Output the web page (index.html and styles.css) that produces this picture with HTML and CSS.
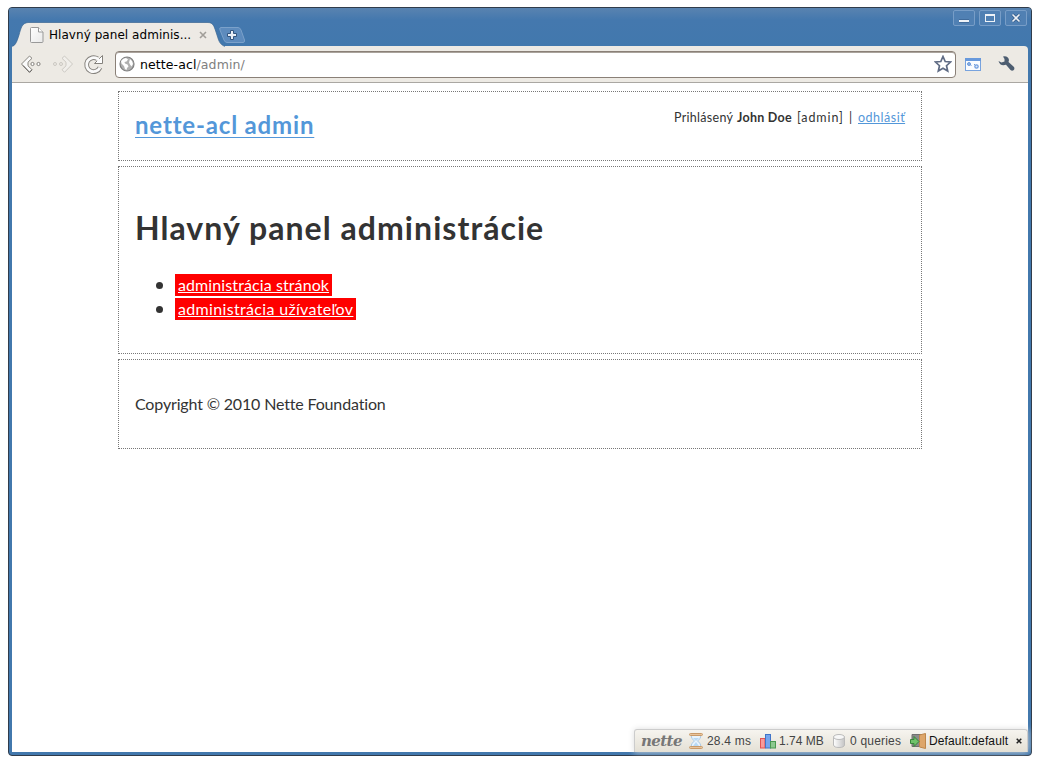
FILE: index.html
```html
<!DOCTYPE html>
<html lang="sk">
<head>
<meta charset="utf-8">
<title>Hlavný panel administrácie</title>
<link rel="stylesheet" href="styles.css">
</head>
<body>
<div class="window">
  <div class="titlebar">
    <div class="tab">
      <svg class="tab-shape" width="214" height="25" viewBox="0 0 214 25"><path d="M0 25C4 23 5 19 7 13C9 6 10 1 16 .5H196C201 .5 202 4 204 10C207 19 207 22 214 25Z" fill="#edeae5"/><path d="M0 24.500C4 23 5 19 7 13C9 6 10 1 16 .5H196C201 .5 202 4 204 10C207 19 207 22 213 24.500" fill="none" stroke="#3a6592" stroke-width=".7"/></svg>
      <svg class="page-icon" width="14" height="16" viewBox="0 0 14 16"><defs><linearGradient id="pg" x2="1" y2="1"><stop stop-color="#fff"/><stop offset="1" stop-color="#e9e9e9"/></linearGradient></defs><path d="M1.500.5h7l4.500 4.500v9.500q0 1-1 1h-10.500q-1 0-1-1v-13q0-1 1-1Z" fill="url(#pg)" stroke="#999"/><path d="M8.500.5V5h4.500" fill="#fff" stroke="#999"/></svg>
      <span class="tab-title">Hlavný panel adminis...</span>
      <svg class="tab-close" width="8" height="8" viewBox="0 0 8 8"><path d="M1 1l6 6M7 1l-6 6" stroke="#a19e99" stroke-width="1.600"/></svg>
    </div>
    <svg class="new-tab" width="27" height="16" viewBox="0 0 27 16"><path d="M2 .5H19Q21 .5 22 3L25.500 13Q26 15.500 24 15.500H8Q6 15.500 5 13L1 3Q0 .5 2 .5Z" fill="#5d8bbd" stroke="#7ba1ca"/><path d="M11.500 3.500h3v3h3v3h-3v3h-3v-3h-3v-3h3Z" fill="#e8eef6" stroke="#32557f"/></svg>
    <div class="controls">
      <span class="control"><svg width="22" height="16" viewBox="0 0 22 16"><path d="M6 11h10" stroke="#315682" stroke-width="3"/><path d="M6 11h10" stroke="#eef2f7" stroke-width="2"/></svg></span>
      <span class="control"><svg width="22" height="16" viewBox="0 0 22 16"><rect x="6.500" y="4.500" width="9" height="7" fill="none" stroke="#eef2f7"/><path d="M6 5h10" stroke="#eef2f7" stroke-width="2"/></svg></span>
      <span class="control"><svg width="22" height="16" viewBox="0 0 22 16"><path d="M7.500 4.500l7 7M14.500 4.500l-7 7" stroke="#315682" stroke-width="3"/><path d="M7.500 4.500l7 7M14.500 4.500l-7 7" stroke="#eef2f7" stroke-width="1.600"/></svg></span>
    </div>
  </div>

  <div class="toolbar">
    <svg class="back" width="22" height="20" viewBox="0 0 22 20"><path d="M1.500 10L9.500 2L12 4.300L8 8.200V11.800L12 15.700L9.500 18.300Z" fill="#fafafa" stroke="#88857f" stroke-linejoin="round"/><path d="M3 11.500L9.500 18.300L12 15.700" fill="none" stroke="#66635f"/><circle cx="12.500" cy="10" r="1.600" fill="#fff" stroke="#85827d"/><circle cx="18.500" cy="10" r="1.600" fill="#fff" stroke="#85827d"/></svg>
    <svg class="forward" width="22" height="20" viewBox="0 0 22 20"><path d="M20.500 10L12.500 2L10 4.300L14 8.200V11.800L10 15.700L12.500 18.300Z" fill="#f1efeb" stroke="#ccc9c3" stroke-linejoin="round"/><circle cx="3" cy="10" r="1.500" fill="none" stroke="#cbc8c2"/><circle cx="9" cy="10" r="1.500" fill="none" stroke="#cbc8c2"/></svg>
    <svg class="reload" width="21" height="21" viewBox="0 0 21 21"><path d="M17 13.500A7 7 0 1 1 14.500 4.800" fill="none" stroke="#85827d" stroke-width="4.800"/><path d="M19.500 1.500V9.500H11.500Z" fill="#fff" stroke="#85827d" stroke-linejoin="round"/><path d="M17 13.500A7 7 0 1 1 14.500 4.800L17 7.500" fill="none" stroke="#fafafa" stroke-width="2.900"/></svg>
    <div class="address">
      <svg width="16" height="16" viewBox="0 0 16 16"><circle cx="8" cy="8" r="7" fill="#b0b0b0" stroke="#808080" stroke-width="1.200"/><path d="M2 5Q4 2 7 2L9 3.500L7.500 5.500L5.500 6L6 7.500L8.500 8.500L9.500 10.500L8 12L7.500 14L6 13L5 10L2.500 7.500ZM11 3Q14 5 14 8L12.500 10.500L11 8.500L10 6.500Z" fill="#fff"/></svg>
      <span class="url"><span class="host">nette-acl</span>/admin/</span>
      <svg class="star" width="18" height="18" viewBox="0 0 18 18"><path d="M9 1.500L11.200 6.500L16.500 7L12.500 10.700L13.700 16L9 13.300L4.300 16L5.500 10.700L1.500 7L6.800 6.500Z" fill="#fff" stroke="#5f6b84" stroke-width="1.700"/></svg>
    </div>
    <svg class="extension" width="16" height="13" viewBox="0 0 16 13"><rect x=".5" y=".5" width="15" height="12" fill="#fafcff" stroke="#78a3de"/><path d="M0 1.500h16" stroke="#6899dc" stroke-width="3"/><circle cx="4" cy="6" r="1.500" fill="#8cb1e5" stroke="#6d9bdc"/><circle cx="11.500" cy="8.500" r="1.700" fill="#dce8f9" stroke="#6d9bdc" stroke-width="1.200"/><path d="M5 6.500l1.500 1M9 6l1 1" stroke="#6d9bdc"/></svg>
    <svg class="wrench" width="18" height="16" viewBox="0 0 18 16"><path d="M5 .5Q10-.5 11 4L10.500 6L16 11Q17 13 15.500 14.300Q14 15.300 12.500 14L8 8.800Q2 10.500.5 5L3.500 6.500L6.500 5.500L6.500 3Z" fill="#4d5d70"/></svg>
  </div>

  <div class="viewport">
    <div class="page">
      <header class="box header">
        <a class="brand">nette-acl admin</a>
        <div class="user"><span class="name">Prihlásený</span><b class="who">John Doe</b><span class="role">[admin]</span><span class="divider">|</span><a class="logout">odhlásiť</a></div>
      </header>
      <main class="box main">
        <h1>Hlavný panel administrácie</h1>
        <ul>
          <li><a class="pages-link">administrácia stránok</a></li>
          <li><a class="users-link">administrácia užívateľov</a></li>
        </ul>
      </main>
      <footer class="box footer"><span>Copyright © 2010 Nette Foundation</span></footer>
    </div>
    <div class="debug">
      <span class="nette">nette</span>
      <svg class="hourglass" width="14" height="16" viewBox="0 0 14 16"><path d="M2 2Q2 6 5.500 8Q2 10 2 14H12Q12 10 8.500 8Q12 6 12 2Z" fill="#e9f4fd" stroke="#a9c9e4"/><path d="M4 5H10L7 8ZM7 9L10 13H4Z" fill="#b9daf5"/><rect x=".5" y=".5" width="13" height="2" rx="1" fill="#e8c49c" stroke="#c99a69"/><rect x=".5" y="13.500" width="13" height="2" rx="1" fill="#e8c49c" stroke="#c99a69"/></svg>
      <span class="time">28.4 ms</span>
      <svg class="bars" width="16" height="15" viewBox="0 0 16 15"><rect x=".5" y="4.500" width="4.500" height="9.500" fill="#f79a9a" stroke="#e15353"/><rect x="5.500" y=".5" width="5" height="13.500" fill="#75a5ee" stroke="#4174c8"/><rect x="10.500" y="7.500" width="5" height="6.500" fill="#8cc98f" stroke="#4a9950"/></svg>
      <span class="memory">1.74 MB</span>
      <svg class="database" width="12" height="14" viewBox="0 0 12 14"><defs><linearGradient id="db"><stop stop-color="#fff"/><stop offset="1" stop-color="#c4c4c4"/></linearGradient></defs><path d="M.5 3V11Q1 13.500 6 13.500T11.500 11V3Z" fill="url(#db)" stroke="#bbb"/><ellipse cx="6" cy="3" rx="5.500" ry="2.500" fill="#f7f7f7" stroke="#bbb"/></svg>
      <span class="queries">0 queries</span>
      <svg class="door" width="16" height="16" viewBox="0 0 16 16"><path d="M2 1.500H11V13.500H2Z" fill="#8b8b8b" stroke="#707070"/><path d="M9.500 2L15.500.5V15.500L9.500 14Z" fill="#dda66a" stroke="#be864b"/><path d="M.5 6.500H4V3.500L9 8.500L4 13.500V10.500H.5Z" fill="#6fc26a" stroke="#37853b"/></svg>
      <span class="presenter">Default:default</span>
      <svg class="debug-close" width="6" height="6" viewBox="0 0 6 6"><path d="M.7.7l4.600 4.600M5.300.7L.7 5.300" stroke="#222" stroke-width="1.500"/></svg>
    </div>
  </div>
</div>
</body>
</html>
```
FILE: styles.css
```css
* { box-sizing: border-box; }
body { margin: 0; height: 762px; padding: 7px 8px; background: #fff; overflow: hidden; color: #333; }
svg { display: block; flex: none; }
span, a { white-space: nowrap; }

.window { width: 1024px; height: 749px; padding: 0 3px 3px; border: 1px solid #303c4b; border-radius: 4px; background: #4278ad; display: flex; flex-direction: column; }
.titlebar { height: 38px; flex: none; display: flex; margin: 0 -3px; padding-left: 3px; background: linear-gradient(#5983b0, #4478ae 12px, #4278ad); border-radius: 3px 3px 0 0; }
.tab { width: 209px; height: 24px; margin-top: 15px; padding-left: 18px; display: flex; align-items: center; position: relative; font: 12px "DejaVu Sans", sans-serif; color: #000; }
.tab-shape { position: absolute; left: 0; top: -1px; }
.page-icon, .tab-title, .tab-close { position: relative; }
.tab-title { margin-left: 5px; width: 142px; letter-spacing: .05px; }
.tab-close { margin-left: 8px; }
.new-tab { margin: 19px 0 0 -2px; }
.controls { margin: 2px 4px 0 auto; display: flex; gap: 4px; }
.control { width: 22px; height: 16px; outline: 1px solid #779dc7; outline-offset: -1px; border-radius: 2px; background: #5080b3; }

.toolbar { height: 37px; flex: none; display: flex; align-items: center; background: #edeae4; border-bottom: 1px solid #aaa7a2; border-radius: 0 4px 0 0; padding-left: 8px; }
.forward { margin-left: 10px; }
.reload { margin-left: 9px; }
.address { width: 841px; height: 27px; margin-left: 11px; border: 1px solid #8a8077; box-shadow: inset 0 1px #aaa39c; border-radius: 4px; background: #fff; display: flex; align-items: center; padding: 0 3px; font: 12.500px "DejaVu Sans", sans-serif; color: #808080; }
.url { margin-left: 5px; letter-spacing: .1px; }
.host { color: #000; }
.star { margin-left: auto; }
.extension { margin-left: 9px; }
.wrench { margin-left: 17px; }

.viewport { flex: 1; min-height: 0; display: flex; flex-direction: column; background: #fff; font-family: Lato, sans-serif; font-variant-ligatures: none; }
.page { width: 804px; margin: 8px auto 0; display: flex; flex-direction: column; gap: 5px; }
.box { border: 1px dotted #777; padding: 0 16px; }
.header { height: 70px; display: flex; justify-content: space-between; }
.brand { height: 30px; margin-top: 18px; font-size: 24px; line-height: 30px; font-weight: 700; color: #5397d9; text-decoration: underline; text-decoration-thickness: 1px; text-underline-offset: 3px; letter-spacing: .83px; }
.user { height: 18px; margin-top: 17px; display: flex; font-size: 12.500px; line-height: 18px; }
.name { width: 63px; letter-spacing: .3px; }
.who { width: 60px; letter-spacing: .27px; }
.role { width: 52px; letter-spacing: .9px; }
.divider { width: 9px; }
.logout { width: 47px; letter-spacing: .5px; color: #5397d9; text-decoration: underline; }
.main { height: 188px; }
h1 { margin: 40px 0 0; font-size: 32px; line-height: 42px; letter-spacing: 1.050px; }
ul { margin: 24px 0 0; padding: 0; list-style: none; font-size: 16px; line-height: 24px; }
li { height: 24px; display: flex; align-items: center; }
li::before { content: ""; width: 7px; height: 7px; margin: 0 12px 0 21px; border-radius: 50%; background: #333; }
li a { height: 22px; line-height: 22px; padding: 0 3px; background: #f00; color: #fff; text-decoration: underline; text-decoration-thickness: 1px; }
.pages-link { width: 157px; letter-spacing: .1px; }
.users-link { width: 181px; letter-spacing: .33px; }
.footer { height: 90px; padding-top: 32px; font-size: 16px; line-height: 24px; letter-spacing: -.16px; }

.debug { width: 394px; height: 23px; margin: auto 0 0 auto; padding: 0 4px 0 6px; display: flex; align-items: center; border: 1px solid #ccc; border-bottom: 0; border-radius: 3px 3px 0 0; background: linear-gradient(#f6f4ef, #e4e0d5); box-shadow: 0 0 6px #ddd; font: 12px "Liberation Sans", sans-serif; color: #444; }
.nette { width: 42px; font: italic 700 15px "DejaVu Serif", serif; color: #777; letter-spacing: -.6px; }
.hourglass { margin-left: 6px; }
.time { margin-left: 4px; width: 44px; letter-spacing: .2px; }
.bars { margin-left: 9px; }
.memory { margin-left: 3px; width: 45px; }
.database { margin-left: 9px; }
.queries { margin-left: 5px; width: 51px; letter-spacing: .2px; }
.door { margin-left: 9px; }
.presenter { margin-left: 3px; width: 80px; color: #111; letter-spacing: .12px; }
.debug-close { margin-left: 7px; }
```
